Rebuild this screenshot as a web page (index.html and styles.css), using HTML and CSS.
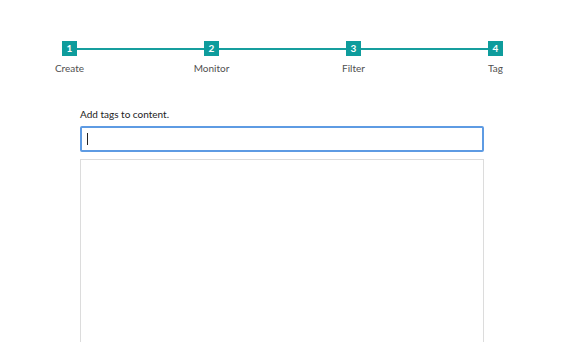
FILE: index.html
```html
<!DOCTYPE html>
<html lang="en">
<head>
    <meta charset="UTF-8">
    <title>Tag</title>
    <link rel="stylesheet" href="styles.css">
</head>
<body>
<div class="stepper">
    <div class="step">
        <span class="num">1</span>
        <span class="label">Create</span>
    </div>
    <div class="bar"></div>
    <div class="step">
        <span class="num">2</span>
        <span class="label">Monitor</span>
    </div>
    <div class="bar"></div>
    <div class="step">
        <span class="num">3</span>
        <span class="label">Filter</span>
    </div>
    <div class="bar"></div>
    <div class="step">
        <span class="num">4</span>
        <span class="label">Tag</span>
    </div>
</div>
<div class="form">
    <label class="title">Add tags to content.</label>
    <div class="input"><span class="caret"></span></div>
    <div class="list"></div>
</div>
</body>
</html>
```

FILE: styles.css
```css
*{margin:0;padding:0;box-sizing:border-box;}
body{
    font-family:Lato,"Noto Sans",sans-serif;
    font-size:10px;
    line-height:14px;
    color:#333;
    background:#fff;
    overflow:hidden;
}
.stepper{
    display:flex;
    align-items:flex-start;
    width:441px;
    margin:41px 0 0 62px;
}
.step{
    width:15px;
    display:flex;
    flex-direction:column;
    align-items:center;
}
.num{
    width:15px;
    height:15px;
    background:#0e9c9c;
    color:#fff;
    font-weight:bold;
    font-size:10px;
    line-height:15px;
    text-align:center;
}
.label{
    margin-top:5px;
    white-space:nowrap;
    color:#505050;
}
.bar{
    flex:1;
    height:2px;
    margin-top:7px;
    background:#169e9e;
}
.form{
    width:404px;
    margin:32px 0 0 80px;
}
.title{
    display:block;
    color:#222;
    margin-bottom:5px;
}
.input{
    height:26px;
    border:2px solid #5e9be3;
    border-radius:2px;
    padding:5px 5px;
}
.caret{
    display:block;
    width:1px;
    height:12px;
    background:#222;
}
.list{
    margin-top:7px;
    height:200px;
    border:1px solid #dcdcdc;
}
```
